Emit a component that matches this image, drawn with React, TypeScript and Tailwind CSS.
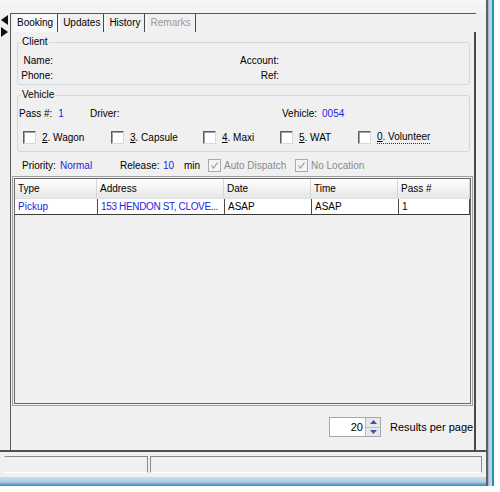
import clsx from 'clsx'

const BLUE = 'text-[#2424e0]'

const COLS = [
  { label: 'Type', w: 'w-[82px]' },
  { label: 'Address', w: 'w-[127px]' },
  { label: 'Date', w: 'w-[87px]' },
  { label: 'Time', w: 'w-[87px]' },
  { label: 'Pass #', w: 'flex-1' },
]

const ROW = [
  { text: 'Pickup', blue: true },
  { text: '153 HENDON ST, CLOVE...', blue: true },
  { text: 'ASAP', blue: false },
  { text: 'ASAP', blue: false },
  { text: '1', blue: false },
]

const VEHICLE_TYPES = [
  { key: '2', label: '. Wagon', w: 'w-[88px]' },
  { key: '3', label: '. Capsule', w: 'w-[92px]' },
  { key: '4', label: '. Maxi', w: 'w-[77px]' },
  { key: '5', label: '. WAT', w: 'w-[78px]' },
  { key: '0', label: '. Volunteer', w: '', focus: true },
]

function Check({ checked, disabled }: { checked?: boolean; disabled?: boolean }) {
  return (
    <span
      className={clsx(
        'inline-flex h-[13px] w-[13px] flex-shrink-0 items-center justify-center border',
        disabled
          ? 'border-[#a9a9a9] bg-[#f4f4f4]'
          : 'border-t-[#5f5f5f] border-l-[#5f5f5f] border-r-[#d8d8d8] border-b-[#d8d8d8] bg-white shadow-[inset_1px_1px_0_#a0a0a0]'
      )}
    >
      {checked && (
        <svg width="9" height="9" viewBox="0 0 9 9">
          <path d="M1.5 4.5 L3.5 7 L7.5 1.5" fill="none" stroke={disabled ? '#9a9a9a' : '#222'} strokeWidth="1.2" />
        </svg>
      )}
    </span>
  )
}

function Group({ title, className, children }: { title: string; className?: string; children: React.ReactNode }) {
  return (
    <fieldset className={clsx('ml-[6px] mr-[4px] rounded-[3px] border border-[#cdd9e2] px-0', className)}>
      <legend className="ml-[3px] px-[1px] leading-[12px]">{title}</legend>
      {children}
    </fieldset>
  )
}

export default function App() {
  return (
    <div className="flex h-[492px] w-[500px] bg-white font-['Liberation_Sans',Arial,sans-serif] text-[10px] text-black">
      <div className="flex w-[486px] flex-col bg-[#f0f0f0]">
        {/* top strip */}
        <div className="h-[13px] border-t-[3px] border-[#f7f7f7] bg-[#f3f3f3]" />

        <div className="flex h-[437px]">
          {/* collapse arrows */}
          <div className="flex w-[10px] flex-col pl-[1px] pt-[2px]">
            <svg width="8" height="22" viewBox="0 0 8 22">
              <path d="M7 0 L0 5 L7 10 Z" fill="#111" />
              <path d="M0 12 L7 17 L0 22 Z" fill="#111" />
            </svg>
          </div>

          {/* tab control */}
          <div className="flex w-[466px] flex-col border-l border-t border-[#5a5a5a]">
            <div className="flex h-[18px] items-stretch pl-[2px] leading-[18px]">
              <div className="border-r border-[#4a4a4a] bg-[#f8f8f8] px-[4px]">Booking</div>
              <div className="ml-[1px] border-l border-r border-l-white border-r-[#4a4a4a] px-[3px]">Updates</div>
              <div className="ml-[1px] border-l border-r border-l-white border-r-[#4a4a4a] px-[3px]">History</div>
              <div className="ml-[1px] border-l border-r border-l-white border-r-[#4a4a4a] px-[4px] text-[#9a9a9a]">Remarks</div>
            </div>

            <div className="flex flex-1 flex-col border-r-2 border-[#4a4a4a] pt-[4px]">
              <Group title="Client" className="pb-[1px]">
                <div className="grid grid-cols-[35px_162px_64px_1fr] pt-[5px] leading-[15px]">
                  <span className="text-right">Name:</span>
                  <span />
                  <span className="text-right">Account:</span>
                  <span />
                  <span className="text-right">Phone:</span>
                  <span />
                  <span className="text-right">Ref:</span>
                  <span />
                </div>
              </Group>

              <Group title="Vehicle" className="mt-[4px] pb-[6px]">
                <div className="flex pl-[1px] pt-[6px] leading-[14px]">
                  <span className="w-[71px]">
                    Pass #:<span className={clsx('ml-[6px]', BLUE)}>1</span>
                  </span>
                  <span className="w-[192px]">Driver:</span>
                  <span>
                    Vehicle:<span className={clsx('ml-[5px]', BLUE)}>0054</span>
                  </span>
                </div>
                <div className="mt-[9px] flex items-center pl-[5px]">
                  {VEHICLE_TYPES.map(v => (
                    <label key={v.key} className={clsx('flex items-center gap-[6px]', v.w)}>
                      <Check />
                      <span className={clsx(v.focus && 'border-b border-dotted border-[#333] leading-[12px]')}>
                        <span className="underline">{v.key}</span>
                        {v.label}
                      </span>
                    </label>
                  ))}
                </div>
              </Group>

              {/* priority / release row */}
              <div className="mt-[5px] flex h-[16px] items-center pl-[11px]">
                <span className="w-[98px]">
                  Priority:<span className={clsx('ml-[4px]', BLUE)}>Normal</span>
                </span>
                <span className="w-[43px]">Release:</span>
                <span className={clsx('w-[21px]', BLUE)}>10</span>
                <span className="w-[24px]">min</span>
                <label className="flex w-[87px] items-center gap-[3px] text-[#8a8a8a]">
                  <Check checked disabled />
                  Auto Dispatch
                </label>
                <label className="flex items-center gap-[3px] text-[#8a8a8a]">
                  <Check checked disabled />
                  No Location
                </label>
              </div>

              {/* grid */}
              <div className="ml-[1px] mr-[1px] mt-[3px] h-[230px] border border-[#a0a0a0] p-[1px]">
                <div className="flex h-full flex-col border border-[#6a6a6a]">
                  <div className="flex h-[19px] bg-gradient-to-b from-white to-[#e6e6e6] leading-[19px]">
                    {COLS.map(c => (
                      <div key={c.label} className={clsx('border-r border-[#d6d6d6] pl-[3px]', c.w)}>
                        {c.label}
                      </div>
                    ))}
                  </div>
                  <div className="flex h-[17px] border-b border-t border-b-[#3a3a3a] border-t-[#e0e0e0] bg-white leading-[15px]">
                    {ROW.map((c, i) => (
                      <div
                        key={i}
                        className={clsx(
                          'overflow-hidden whitespace-nowrap pl-[3px]',
                          COLS[i].w,
                          i === 1 && 'tracking-[-0.35px]',
                          i > 0 && 'border-l border-[#4a4a4a]',
                          i === 4 && 'border-r',
                          c.blue ? BLUE : 'text-black'
                        )}
                      >
                        {c.text}
                      </div>
                    ))}
                  </div>
                </div>
              </div>

              {/* results per page */}
              <div className="mt-[11px] flex items-center pl-[318px]">
                <div className="flex h-[20px] w-[52px] border border-[#a8a8a8] bg-white">
                  <span className="flex-1 pr-[2px] text-right text-[11px] leading-[18px]">20</span>
                  <div className="flex w-[15px] flex-col border-l border-[#b8b8b8] bg-[#e8e8e8]">
                    <div className="flex flex-1 items-center justify-center border-b border-[#c0c0c0]">
                      <svg width="7" height="4" viewBox="0 0 7 4"><path d="M0 4 L3.5 0 L7 4 Z" fill="#3a56a8" /></svg>
                    </div>
                    <div className="flex flex-1 items-center justify-center">
                      <svg width="7" height="4" viewBox="0 0 7 4"><path d="M0 0 L3.5 4 L7 0 Z" fill="#3a56a8" /></svg>
                    </div>
                  </div>
                </div>
                <span className="ml-[9px] text-[11px]">Results per page</span>
              </div>
            </div>
          </div>
          <div className="flex-1" />
        </div>

        {/* status bar */}
        <div className="flex h-[27px] gap-[2px] border-t-2 border-[#505050] pl-[4px] pr-[4px] pt-[4px]">
          <div className="h-[17px] w-[144px] border border-b-white border-l-transparent border-r-[#8a8a8a] border-t-[#8a8a8a]" />
          <div className="h-[17px] flex-1 border border-[#8a8a8a] border-b-white" />
        </div>

        {/* bottom frame */}
        <div className="h-[9px] bg-gradient-to-b from-[#c9dced] via-[#b6d0e8] to-[#2b8bb8]" />
        <div className="flex-1 bg-white" />
      </div>

      {/* right window frame */}
      <div className="flex h-[486px]">
        <div className="w-[2px] bg-[#606060]" />
        <div className="w-[1px] bg-[#9fb4c8]" />
        <div className="w-[3px] bg-[#bcd4ea]" />
        <div className="w-[2px] bg-[#2b8bb8]" />
      </div>
    </div>
  )
}
